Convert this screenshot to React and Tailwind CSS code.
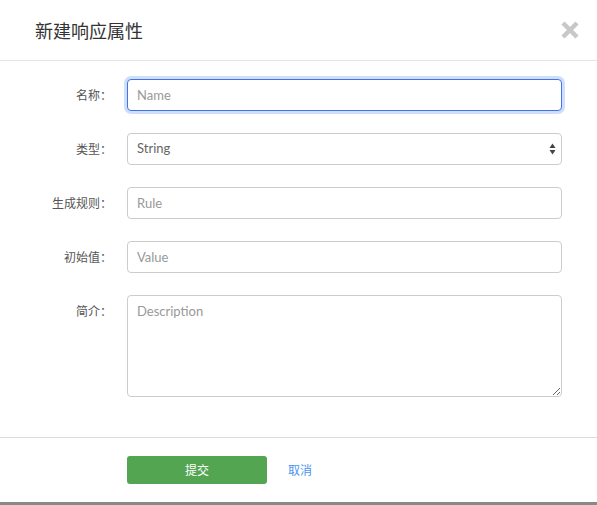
import React from "react";

const cjk = { fontFamily: '"Noto Sans CJK SC", "Noto Sans", sans-serif' };
const latin = { fontFamily: 'Lato, "Noto Sans CJK SC", sans-serif' };

function Label({ children, top }) {
  return (
    <div
      className={`w-[112px] shrink-0 text-right text-[12px] text-[#555] ${top ? "pt-[7px]" : ""}`}
      style={cjk}
    >
      {children}
    </div>
  );
}

const inputBase =
  "w-[435px] h-[32px] rounded-[4px] border border-[#ccc] bg-white px-[9px] text-[13px] text-[#666] placeholder:text-[#999] outline-none";

export default function App() {
  return (
    <div className="w-[597px] h-[505px] bg-white flex flex-col overflow-hidden">
      <div className="h-[61px] shrink-0 border-b border-[#e5e5e5] flex items-center justify-between pl-[35px] pr-[16px]">
        <div className="text-[18px] text-[#333] leading-none" style={cjk}>
          新建响应属性
        </div>
        <svg width="20" height="20" viewBox="0 0 20 20" className="mr-[1px]">
          <path d="M3 3 L17 17 M17 3 L3 17" stroke="#c8c8c8" strokeWidth="4.5" strokeLinecap="butt" />
        </svg>
      </div>

      <div className="flex flex-col gap-[22px] pt-[18px] h-[376px] shrink-0">
        <div className="flex items-center">
          <Label>名称：</Label>
          <div className="pl-[15px]">
            <input
              className={`w-[435px] h-[32px] rounded-[4px] border border-[#3f74ee] bg-white px-[9px] text-[13px] text-[#666] placeholder:text-[#999] outline-none shadow-[0_0_0_3px_rgba(100,145,240,0.3)]`}
              placeholder="Name"
              style={latin}
            />
          </div>
        </div>
        <div className="flex items-center">
          <Label>类型：</Label>
          <div className="pl-[15px] relative">
            <select className={`${inputBase} appearance-none`} style={latin} defaultValue="String">
              <option>String</option>
            </select>
            <svg
              className="absolute right-[6px] top-[10px] pointer-events-none"
              width="7"
              height="12"
              viewBox="0 0 7 12"
            >
              <path d="M3.5 0.5 L6.5 5 L0.5 5 Z" fill="#444" />
              <path d="M3.5 11.5 L6.5 7 L0.5 7 Z" fill="#444" />
            </svg>
          </div>
        </div>
        <div className="flex items-center">
          <Label>生成规则：</Label>
          <div className="pl-[15px]">
            <input className={inputBase} placeholder="Rule" style={latin} />
          </div>
        </div>
        <div className="flex items-center">
          <Label>初始值：</Label>
          <div className="pl-[15px]">
            <input className={inputBase} placeholder="Value" style={latin} />
          </div>
        </div>
        <div className="flex items-start">
          <Label top>简介：</Label>
          <div className="pl-[15px]">
            <textarea
              className="block w-[435px] h-[102px] rounded-[4px] border border-[#ccc] bg-white px-[9px] py-[6px] text-[13px] text-[#666] placeholder:text-[#999] outline-none"
              placeholder="Description"
              style={latin}
            />
          </div>
        </div>
      </div>

      <div className="border-t border-[#ddd] flex items-center h-[65px] shrink-0 pl-[127px]">
        <button
          className="w-[140px] h-[28px] rounded-[3px] bg-[#53a552] text-white text-[12px]"
          style={cjk}
        >
          提交
        </button>
        <span className="ml-[21px] text-[12px] text-[#4a94f0]" style={cjk}>
          取消
        </span>
      </div>
      <div className="flex-1 bg-[#888]" />
    </div>
  );
}
